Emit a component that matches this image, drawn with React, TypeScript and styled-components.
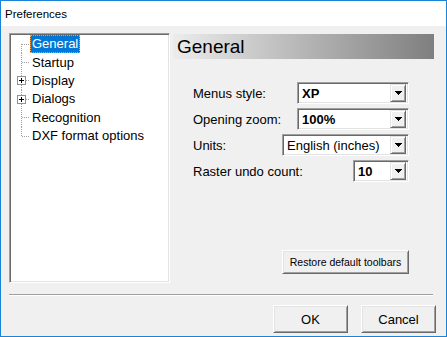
import styled, { createGlobalStyle } from 'styled-components'

const GlobalStyle = createGlobalStyle`
  html, body {
    margin: 0;
    padding: 0;
    background: #f0f0f0;
  }
  * {
    box-sizing: border-box;
  }
`

const Window = styled.div`
  width: 447px;
  height: 337px;
  border: 1px solid #1883d7;
  display: flex;
  flex-direction: column;
  font-family: 'Liberation Sans', Arial, sans-serif;
  color: #000;
  overflow: hidden;
`

const TitleBar = styled.div`
  height: 25px;
  flex: none;
  background: #fff;
  display: flex;
  align-items: center;
  padding-left: 4px;
  font-size: 11.5px;
`

const Body = styled.div`
  flex: 1;
  background: #f0f0f0;
  display: flex;
  flex-direction: column;
  padding: 7px 12px 0 8px;
`

const Main = styled.div`
  display: flex;
  gap: 3px;
  height: 250px;
`

const TreeBox = styled.div`
  width: 161px;
  height: 100%;
  background: #fff;
  border-top: 1px solid #a0a0a0;
  border-left: 1px solid #a0a0a0;
  border-right: 1px solid #fff;
  border-bottom: 1px solid #fff;
  box-shadow: inset 1px 1px #696969, inset -1px -1px #e3e3e3;
  padding: 1px;
  font-size: 13px;
`

const TreeRow = styled.div`
  display: flex;
  align-items: center;
  height: 18.4px;
`

const TreeLabel = styled.span<{ $selected?: boolean }>`
  height: 18px;
  line-height: 18px;
  padding: 0 2px;
  white-space: nowrap;
  background: ${(p) => (p.$selected ? '#0078d7' : 'transparent')};
  color: ${(p) => (p.$selected ? '#fff' : '#000')};
  outline: ${(p) => (p.$selected ? '1px dotted #f0a050' : 'none')};
  outline-offset: -1px;
`

const Panel = styled.div`
  flex: 1;
  margin-top: 1px;
  display: flex;
  flex-direction: column;
`

const PanelHeader = styled.div`
  height: 25px;
  line-height: 25px;
  padding-left: 4px;
  font-size: 19px;
  background: linear-gradient(to right, #ececec, #7f7f7f);
`

const Form = styled.div`
  display: flex;
  flex-direction: column;
  gap: 4px;
  padding: 23px 25px 0 20px;
`

const FormRow = styled.div`
  display: flex;
  align-items: center;
  justify-content: space-between;
  height: 22px;
  font-size: 13px;
`

const Combo = styled.div<{ $width: number; $bold?: boolean }>`
  width: ${(p) => p.$width}px;
  height: 22px;
  display: flex;
  align-items: center;
  background: #fff;
  border-top: 1px solid #a0a0a0;
  border-left: 1px solid #a0a0a0;
  border-right: 1px solid #fff;
  border-bottom: 1px solid #fff;
  box-shadow: inset 1px 1px #696969, inset -1px -1px #e3e3e3;
  padding: 2px;
  font-size: 13px;
  font-weight: ${(p) => (p.$bold ? 700 : 400)};
`

const ComboText = styled.span`
  flex: 1;
  padding-left: 2px;
  white-space: nowrap;
`

const DropButton = styled.div`
  width: 16px;
  height: 18px;
  flex: none;
  display: flex;
  align-items: center;
  justify-content: center;
  background: #f0f0f0;
  border-top: 1px solid #e3e3e3;
  border-left: 1px solid #e3e3e3;
  border-right: 1px solid #696969;
  border-bottom: 1px solid #696969;
  box-shadow: inset 1px 1px #fff, inset -1px -1px #a0a0a0;
`

const ButtonArea = styled.div`
  display: flex;
  justify-content: flex-end;
  padding-right: 25px;
  margin-top: 68px;
`

const Button = styled.button<{ $w: number; $h: number; $size: number }>`
  width: ${(p) => p.$w}px;
  height: ${(p) => p.$h}px;
  background: #f0f0f0;
  font-family: 'Liberation Sans', Arial, sans-serif;
  font-size: ${(p) => p.$size}px;
  color: #000;
  padding: 0;
  border-top: 1px solid #fff;
  border-left: 1px solid #fff;
  border-right: 1px solid #696969;
  border-bottom: 1px solid #696969;
  box-shadow: inset 1px 1px #e3e3e3, inset -1px -1px #a0a0a0;
`

const Separator = styled.div`
  margin-top: 11px;
  margin-right: 1px;
  height: 2px;
  border-top: 1px solid #a0a0a0;
  border-bottom: 1px solid #fff;
`

const Footer = styled.div`
  display: flex;
  justify-content: flex-end;
  gap: 13px;
  margin-top: 9px;
  margin-right: -2px;
`

const items = [
  { label: 'General', selected: true },
  { label: 'Startup' },
  { label: 'Display', expandable: true },
  { label: 'Dialogs', expandable: true },
  { label: 'Recognition' },
  { label: 'DXF format options' },
]

const Gutter = ({ first, last, expandable }: { first: boolean; last: boolean; expandable?: boolean }) => (
  <svg width="19" height="19" style={{ flex: 'none' }} shapeRendering="crispEdges">
    <line x1="10.5" y1={first ? 9 : 0} x2="10.5" y2={last ? 10 : 19} stroke="#a0a0a0" strokeDasharray="1 1" />
    <line x1="11" y1="9.5" x2="19" y2="9.5" stroke="#a0a0a0" strokeDasharray="1 1" />
    {expandable && (
      <>
        <rect x="6.5" y="5.5" width="8" height="8" fill="#fff" stroke="#919191" />
        <line x1="8" y1="9.5" x2="13" y2="9.5" stroke="#000" />
        <line x1="10.5" y1="7" x2="10.5" y2="12" stroke="#000" />
      </>
    )}
  </svg>
)

const Arrow = () => (
  <svg width="7" height="4" shapeRendering="crispEdges">
    <path d="M0 0H7L3.5 4Z" fill="#000" />
  </svg>
)

const fields = [
  { label: 'Menus style:', value: 'XP', width: 112, bold: true },
  { label: 'Opening zoom:', value: '100%', width: 112, bold: true },
  { label: 'Units:', value: 'English (inches)', width: 127 },
  { label: 'Raster undo count:', value: '10', width: 56, bold: true },
]

export default function App() {
  return (
    <>
      <GlobalStyle />
      <Window>
        <TitleBar>Preferences</TitleBar>
        <Body>
          <Main>
            <TreeBox>
              {items.map((it, i) => (
                <TreeRow key={it.label}>
                  <Gutter first={i === 0} last={i === items.length - 1} expandable={it.expandable} />
                  <TreeLabel $selected={it.selected}>{it.label}</TreeLabel>
                </TreeRow>
              ))}
            </TreeBox>
            <Panel>
              <PanelHeader>General</PanelHeader>
              <Form>
                {fields.map((f) => (
                  <FormRow key={f.label}>
                    <span>{f.label}</span>
                    <Combo $width={f.width} $bold={f.bold}>
                      <ComboText>{f.value}</ComboText>
                      <DropButton>
                        <Arrow />
                      </DropButton>
                    </Combo>
                  </FormRow>
                ))}
              </Form>
              <ButtonArea>
                <Button $w={127} $h={24} $size={10.5}>Restore default toolbars</Button>
              </ButtonArea>
            </Panel>
          </Main>
          <Separator />
          <Footer>
            <Button $w={75} $h={28} $size={13}>OK</Button>
            <Button $w={75} $h={28} $size={13}>Cancel</Button>
          </Footer>
        </Body>
      </Window>
    </>
  )
}
